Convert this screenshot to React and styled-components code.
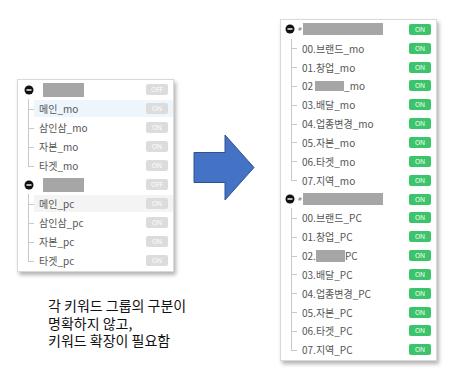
import React from "react";
import styled, { createGlobalStyle } from "styled-components";

const Global = createGlobalStyle`
  html, body { margin: 0; padding: 0; background: #fff; }
  body { font-family: "Noto Sans CJK KR", "Noto Sans", sans-serif; }
`;

const Page = styled.div`
  display: flex;
  align-items: flex-start;
  width: 473px;
  height: 381px;
  padding-left: 17px;
  box-sizing: border-box;
  overflow: hidden;
`;

const LeftCol = styled.div`
  display: flex;
  flex-direction: column;
  margin-top: 79px;
  width: 157px;
`;

const Panel = styled.div`
  width: ${(p) => p.$w}px;
  background: #fff;
  border: 1px solid #d9d9d9;
  box-sizing: border-box;
  box-shadow: 2px 3px 4px rgba(0, 0, 0, 0.3);
  padding: 0 0 1px 0;
  margin-top: ${(p) => p.$top || 0}px;
  margin-left: ${(p) => p.$left || 0}px;
`;

const Note = styled.div`
  margin-top: 25px;
  padding-left: 31px;
  display: flex;
  flex-direction: column;
  font-family: "Noto Sans CJK KR", sans-serif;
  font-size: 14px;
  line-height: 17.5px;
  color: #111;
  white-space: nowrap;
`;

const NoteLine = styled.div`
  height: 17.5px;
`;

const ArrowWrap = styled.div`
  margin-top: 134px;
  margin-left: 19px;
  width: 62px;
  height: 67px;
  flex: none;
  svg { display: block; }
`;

const HeaderRow = styled.div`
  display: flex;
  align-items: center;
  height: ${(p) => p.$h}px;
  padding-left: ${(p) => p.$pl}px;
  padding-right: 5px;
`;

const Toggle = styled.span`
  display: flex;
  width: 10px;
  height: 10px;
  flex: none;
  svg { display: block; }
`;

const Mark = styled.span`
  font-family: "Noto Sans", sans-serif;
  font-size: 6px;
  line-height: 10px;
  color: #777;
  margin-left: 3px;
  flex: none;
`;

const Redact = styled.span`
  display: inline-block;
  background: #a6a6a6;
  width: ${(p) => p.$w}px;
  height: ${(p) => p.$h}px;
  margin-left: ${(p) => p.$ml || 0}px;
  flex: none;
`;

const Btn = styled.span`
  margin-left: auto;
  width: 22px;
  height: 11px;
  border-radius: 2px;
  background: ${(p) => (p.$on ? "#3cc46a" : "#dcdcdc")};
  color: #fff;
  font-family: "Noto Sans", sans-serif;
  font-size: 6.5px;
  line-height: 11px;
  text-align: center;
  flex: none;
`;

const Children = styled.div`
  display: flex;
  flex-direction: column;
`;

const ChildRow = styled.div`
  display: flex;
  align-items: stretch;
  height: ${(p) => p.$h}px;
`;

const Branch = styled.span`
  position: relative;
  width: 16px;
  flex: none;
  &::before {
    content: "";
    position: absolute;
    left: 10px;
    top: 0;
    width: 1px;
    height: ${(p) => (p.$last ? "50%" : "100%")};
    background: #c8c8c8;
  }
  &::after {
    content: "";
    position: absolute;
    left: 10px;
    top: 50%;
    width: 6px;
    height: 1px;
    background: #c8c8c8;
  }
`;

const Content = styled.div`
  flex: 1;
  display: flex;
  align-items: center;
  padding-left: 5px;
  padding-right: 5px;
  margin: 1px 0;
  background: ${(p) => p.$bg || "transparent"};
`;

const Label = styled.span`
  font-family: "Noto Sans CJK KR", sans-serif;
  font-size: 10px;
  color: #555;
  white-space: nowrap;
  display: flex;
  align-items: center;
`;

const ToggleIcon = () => (
  <Toggle>
    <svg width="10" height="10" viewBox="0 0 10 10">
      <circle cx="5" cy="5" r="4.5" fill="#111" />
      <rect x="2.5" y="4.3" width="5" height="1.4" fill="#fff" />
    </svg>
  </Toggle>
);

const Arrow = () => (
  <svg width="62" height="67" viewBox="0 0 62 67">
    <polygon
      points="1,18.5 32,18.5 32,1 61,33.5 32,66 32,48.5 1,48.5"
      fill="#4472c4"
      stroke="#2f528f"
      strokeWidth="1"
    />
  </svg>
);

function Group({ header, items, on, h, pl = 6, bgs = [] }) {
  return (
    <>
      <HeaderRow $h={h} $pl={pl}>
        <ToggleIcon />
        {header}
        <Btn $on={on}>{on ? "ON" : "OFF"}</Btn>
      </HeaderRow>
      <Children>
        {items.map((it, i) => (
          <ChildRow key={i} $h={h}>
            <Branch $last={i === items.length - 1} />
            <Content $bg={bgs[i]}>
              <Label>{it}</Label>
              <Btn $on={on}>ON</Btn>
            </Content>
          </ChildRow>
        ))}
      </Children>
    </>
  );
}

const moItems = [
  "00.브랜드_mo",
  "01.창업_mo",
  <>02<Redact $w={29} $h={10} $ml={2} />_mo</>,
  "03.배달_mo",
  "04.업종변경_mo",
  "05.자본_mo",
  "06.타겟_mo",
  "07.지역_mo",
];

const pcItems = [
  "00.브랜드_PC",
  "01.창업_PC",
  <>02.<Redact $w={29} $h={12} />PC</>,
  "03.배달_PC",
  "04.업종변경_PC",
  "05.자본_PC",
  "06.타겟_PC",
  "07.지역_PC",
];

const rightHeader = (
  <>
    <Mark>#</Mark>
    <Redact $w={80} $h={12} $ml={1} />
  </>
);

export default function App() {
  return (
    <>
      <Global />
      <Page>
        <LeftCol>
          <Panel $w={157}>
            <Group
              h={19}
              on={false}
              header={<Redact $w={41} $h={14} $ml={9} />}
              items={["메인_mo", "삼인삼_mo", "자본_mo", "타겟_mo"]}
              bgs={["#eef6fd"]}
            />
            <Group
              h={19}
              on={false}
              header={<Redact $w={41} $h={14} $ml={9} />}
              items={["메인_pc", "삼인삼_pc", "자본_pc", "타겟_pc"]}
              bgs={["#f4f4f4"]}
            />
          </Panel>
          <Note>
            <NoteLine>각 키워드 그룹의 구분이</NoteLine>
            <NoteLine>명확하지 않고,</NoteLine>
            <NoteLine>키워드 확장이 필요함</NoteLine>
          </Note>
        </LeftCol>
        <ArrowWrap>
          <Arrow />
        </ArrowWrap>
        <Panel $w={157} $top={19} $left={25}>
          <Group h={18.85} pl={4} on={true} header={rightHeader} items={moItems} />
          <Group h={18.85} pl={4} on={true} header={rightHeader} items={pcItems} />
        </Panel>
      </Page>
    </>
  );
}
